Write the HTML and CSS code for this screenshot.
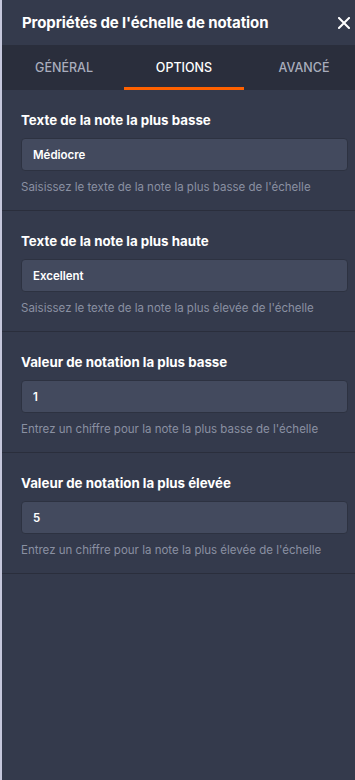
FILE: index.html
```html
<!DOCTYPE html>
<html lang="fr">
<head>
<meta charset="utf-8">
<link rel="stylesheet" href="styles.css">
</head>
<body>
<div class="panel">
  <div class="header">
    <div class="title">Propriétés de l'échelle de notation</div>
    <svg class="close" width="12" height="12" viewBox="0 0 12 12"><path d="M1 1L11 11M11 1L1 11" stroke="#ffffff" stroke-width="2" stroke-linecap="square"/></svg>
  </div>
  <div class="tabs">
    <div class="tab">GÉNÉRAL</div>
    <div class="tab active">OPTIONS</div>
    <div class="tab">AVANCÉ</div>
  </div>
  <div class="section">
    <div class="label">Texte de la note la plus basse</div>
    <div class="input">Médiocre</div>
    <div class="help">Saisissez le texte de la note la plus basse de l'échelle</div>
  </div>
  <div class="section">
    <div class="label">Texte de la note la plus haute</div>
    <div class="input">Excellent</div>
    <div class="help">Saisissez le texte de la note la plus élevée de l'échelle</div>
  </div>
  <div class="section">
    <div class="label">Valeur de notation la plus basse</div>
    <div class="input">1</div>
    <div class="help">Entrez un chiffre pour la note la plus basse de l'échelle</div>
  </div>
  <div class="section">
    <div class="label">Valeur de notation la plus élevée</div>
    <div class="input">5</div>
    <div class="help">Entrez un chiffre pour la note la plus élevée de l'échelle</div>
  </div>
</div>
</body>
</html>
```
FILE: styles.css
```css
html, body {
  margin: 0;
  padding: 0;
  height: 100%;
  background: #c5c7dc;
}
body {
  font-family: Inter, "Noto Sans", sans-serif;
  overflow: hidden;
}
.panel {
  margin-left: 2px;
  height: 780px;
  background: #343a4c;
  overflow: hidden;
}
.header {
  height: 45px;
  display: flex;
  align-items: center;
  justify-content: space-between;
  padding: 0 5px 0 20px;
}
.title {
  color: #ffffff;
  font-size: 15px;
  font-weight: 700;
  letter-spacing: -0.1px;
}
.close {
  display: block;
}
.tabs {
  height: 45px;
  background: #2a2e3c;
  display: flex;
  padding-left: 2px;
}
.tab {
  flex: 0 0 120px;
  display: flex;
  align-items: center;
  justify-content: center;
  color: #a9adbd;
  font-size: 12.5px;
  font-weight: 500;
  box-sizing: border-box;
  border-bottom: 3px solid transparent;
  padding-top: 3px;
}
.tab.active {
  color: #ffffff;
  border-bottom-color: #ff6100;
}
.section {
  padding: 20px 7px 15px 19px;
  border-bottom: 1px solid #2a2e3c;
}
.label {
  color: #ffffff;
  font-size: 13.3px;
  font-weight: 700;
  line-height: 20px;
  margin-bottom: 8px;
}
.input {
  height: 31px;
  background: #434a5e;
  border: 1px solid #2d3241;
  border-radius: 4px;
  color: #ffffff;
  font-size: 11.5px;
  font-weight: 600;
  display: flex;
  align-items: center;
  padding-left: 11px;
}
.help {
  margin-top: 8px;
  color: #8a90a2;
  font-size: 11.5px;
  line-height: 16px;
}
```
